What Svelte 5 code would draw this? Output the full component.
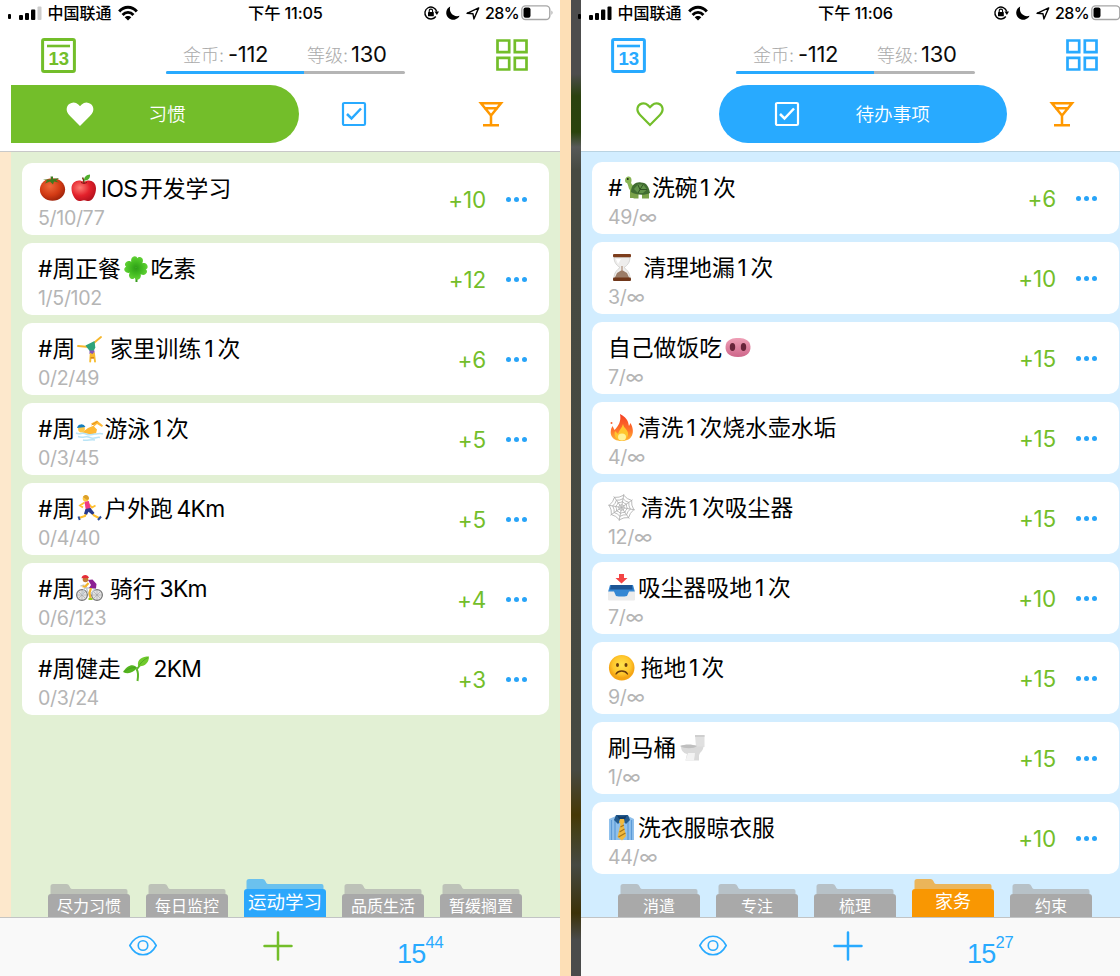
<script>
  // Title parts: [start, content]; a leading colon marks a drawn pictogram.
  const habits = [
    { parts: [[38, ':tomato'], [69.5, ':apple'], [101, 'IOS'], [140, '开发学习']], count: '5/10/77', score: '+10' },
    { parts: [[38, '#周正餐'], [122, ':clover'], [150.5, '吃素']], count: '1/5/102', score: '+12' },
    { parts: [[38, '#周'], [76, ':cartwheel'], [110, '家里训练'], [204.5, '1'], [217.5, '次']], count: '0/2/49', score: '+6' },
    { parts: [[38, '#周'], [76, ':swim'], [104.5, '游泳'], [153, '1'], [166, '次']], count: '0/3/45', score: '+5' },
    { parts: [[38, '#周'], [76, ':run'], [104.5, '户外跑'], [176.5, '4Km']], count: '0/4/40', score: '+5' },
    { parts: [[38, '#周'], [76, ':bike'], [110, '骑行'], [159.5, '3Km']], count: '0/6/123', score: '+4' },
    { parts: [[38, '#周健走'], [121.5, ':seedling'], [153.5, '2KM']], count: '0/3/24', score: '+3' }
  ];
  const todos = [
    { parts: [[38, '#'], [53.5, ':turtle'], [82, '洗碗'], [130, '1'], [143, '次']], count: '49/∞', score: '+6' },
    { parts: [[39, ':hourglass'], [74.5, '清理地漏'], [168.5, '1'], [181.5, '次']], count: '3/∞', score: '+10' },
    { parts: [[38, '自己做饭吃'], [154, ':pig']], count: '7/∞', score: '+15' },
    { parts: [[39, ':fire'], [69, '清洗'], [117.5, '1'], [130.5, '次烧水壶水垢']], count: '4/∞', score: '+15' },
    { parts: [[39, ':web'], [71.7, '清洗'], [120, '1'], [133, '次吸尘器']], count: '12/∞', score: '+15' },
    { parts: [[39, ':inbox'], [69, '吸尘器吸地'], [186, '1'], [199, '次']], count: '7/∞', score: '+10' },
    { parts: [[39, ':sad'], [71.7, '拖地'], [120, '1'], [132.5, '次']], count: '9/∞', score: '+15' },
    { parts: [[38, '刷马桶'], [108.5, ':toilet']], count: '1/∞', score: '+15' },
    { parts: [[39, ':shirt'], [69, '洗衣服晾衣服']], count: '44/∞', score: '+10' }
  ];
  const screens = [
    { kind: 'habit', time: '下午 11:05', rows: habits, sup: '44', active: 2,
      folders: ['尽力习惯', '每日监控', '运动学习', '品质生活', '暂缓搁置'] },
    { kind: 'todo', time: '下午 11:06', rows: todos, sup: '27', active: 3,
      folders: ['消遣', '专注', '梳理', '家务', '约束'] }
  ];
  const width = (parts, i) => (i + 1 < parts.length ? parts[i + 1][0] - parts[i][0] + 'px' : 'auto');
  const spokes = [0, 45, 90, 135];
</script>

{#snippet pictogram(name)}
  <svg class="emoji" viewBox="0 0 27 27">
    {#if name === ':tomato'}
      <defs><radialGradient id="g-tomato" cx=".4" cy=".35" r=".75"><stop offset="0" stop-color="#ef6a3c" /><stop offset=".55" stop-color="#d23a14" /><stop offset="1" stop-color="#8f1d08" /></radialGradient></defs>
      <ellipse cx="14.500" cy="14.500" rx="12.600" ry="11.300" fill="url(#g-tomato)" />
      <path d="M13 4.500l-.5-3 2.500 0 0 2.500 6-1-3 2.500 3 2-5-1-1 3-3-3-5 2 2-3-4-1z" fill="#3e7a1f" />
    {:else if name === ':apple'}
      <defs><radialGradient id="g-apple" cx=".35" cy=".35" r=".8"><stop offset="0" stop-color="#ff7d74" /><stop offset=".5" stop-color="#e3212b" /><stop offset="1" stop-color="#a80d1a" /></radialGradient></defs>
      <path d="M14 7C9 3.500 1.500 6 1.500 13.500c0 6 4 12.500 8 12.500 2 0 2.500-.8 4.500-.8s2.500.8 4.500.8c4 0 7.500-6.500 7.500-12.500C26 6 19 3.500 14 7z" fill="url(#g-apple)" />
      <path d="M11 7.500q3 2 6 0" stroke="#8e0d14" stroke-width="1" fill="none" />
      <path d="M14 8c0-3-.5-4-1.500-5.500" stroke="#6b3b16" stroke-width="1.400" fill="none" />
      <path d="M14 5.500c0-4 2.500-5.500 6-6 .3 4-2 6-6 6z" fill="#4fae2c" />
    {:else if name === ':clover'}
      <defs><radialGradient id="g-clover" gradientUnits="userSpaceOnUse" cx="14" cy="13" r="13"><stop offset="0" stop-color="#2c9d16" /><stop offset=".5" stop-color="#45bd22" /><stop offset="1" stop-color="#69d63b" /></radialGradient></defs>
      <path d="M14 13c1.500 5 .3 9 .5 14" stroke="#3a9d20" stroke-width="2" fill="none" />
      {#each [8, 98, 188, 278] as a}
        <path d="M14 13C8 10.500 7 5 9 2.800 11 .8 13.300 1.500 14 3.200c.7-1.700 3-2.400 5-.4 2 2.200 1 7.700-5 10.200z" fill="url(#g-clover)" transform="rotate({a} 14 13)" />
      {/each}
    {:else if name === ':cartwheel'}
      <path d="M2 11l11 1L25 2" stroke="#f6b72c" stroke-width="1.900" fill="none" stroke-linecap="round" />
      <path d="M9.500 10.500L18.500 6l.8 6.500-1.600 3.500h-4z" fill="#2ea37b" />
      <path d="M13.500 15.500h5v3.500h-5z" fill="#8655b5" />
      <path d="M14.700 19l-.5 7.500M18 18.500l1 8" stroke="#f7bd31" stroke-width="1.900" stroke-linecap="round" />
      <circle cx="16.300" cy="21" r="2.300" fill="#f8b930" /><path d="M14.500 22h3.600v1.700h-3.600z" fill="#d98a17" />
    {:else if name === ':swim'}
      <path d="M6 17.500l6-4.500 6-2.500-3-2 6-3 6 5-1 1.500-5-3-3 2.500 3 3-1 4-6 1z" fill="#ffb934" />
      <path d="M15.500 10l6-3.500" stroke="#e18f1c" stroke-width="1" fill="none" />
      <circle cx="5.500" cy="14" r="3.400" fill="#ffc94a" /><path d="M1 13a4.500 4.500 0 0 1 8.500-1z" fill="#157ec0" />
      <path d="M0 18c4 2 6-1 10 1s6 0 9 0 5-1 8 0M2 21.500c5 2 8-1 12 1s7-1 10 0M7 25c4 1 8-1 12 0" stroke="#b9e4f6" stroke-width="1.500" fill="none" />
    {:else if name === ':run'}
      <path d="M11 15l-2 6-6 2M14 15l4 5.500 6 3" stroke="#ffc02e" stroke-width="2.100" fill="none" />
      <path d="M8.500 7.500L4 10.500l3 2M13 9l3 3.500 3.500-2" stroke="#ffc02e" stroke-width="1.800" fill="none" />
      <path d="M8.500 6.500l4.300-.5 2 8-5 1z" fill="#ef3984" />
      <path d="M9.500 14l5-1 4 5-2.300 1.800-3.700-3-1.500 3-3-1z" fill="#273a8d" />
      <circle cx="9.700" cy="3.500" r="3" fill="#ffc841" /><path d="M7 2c2-3.500 6-2 6 2l-2 1z" fill="#dca02a" />
      <path d="M2.500 21.500l1.200 3.500M22 25l3-3.500" stroke="#2e4e9b" stroke-width="2" />
    {:else if name === ':bike'}
      <circle cx="6" cy="20" r="5.400" fill="#e2e2e2" stroke="#777" stroke-width="1.200" />
      <circle cx="21" cy="20" r="5.400" fill="#e2e2e2" stroke="#777" stroke-width="1.200" />
      {#each [6, 21] as x}
        {#each spokes as a}<path d="M{x - 5} 20h10" stroke="#999" stroke-width=".5" transform="rotate({a} {x} 20)" />{/each}
      {/each}
      <path d="M6 20l3.500-9 4 10 6-8M9 13h9M4.500 11l4-1" stroke="#c2cad0" stroke-width="1.400" fill="none" />
      <path d="M12 5l4.500-.5 4 4.500-.5 4.500-7-.5 2-3z" fill="#8c2193" />
      <path d="M12.500 8l-3 3.500-3 0M15 13l-1.500 5 1 5" stroke="#f6b629" stroke-width="2.200" fill="none" />
      <circle cx="9.500" cy="4.500" r="2.800" fill="#c27a35" /><path d="M5.500 3.200c.5-4 6.500-4.500 7.500-.2z" fill="#e52c38" />
      <path d="M12.500 24h4" stroke="#9acc22" stroke-width="2" />
    {:else if name === ':seedling'}
      <path d="M15.500 26c1-6 1-9-1-12M15 14l4-5" stroke="#5cb628" stroke-width="2" fill="none" />
      <path d="M15 13C12 8 5 10 1 17c5 2.500 10 1 14-4z" fill="#55b51f" />
      <path d="M16 11C15 4 20 1.500 27 1.500c0 6-4 10.500-11 9.500z" fill="#70ca2c" />
      <path d="M15 13C11 12 7 13 2 17M17 10.500c3-4 5-6 9-8" stroke="#3d951b" stroke-width=".6" fill="none" />
    {:else if name === ':turtle'}
      <path d="M6 16h4.500v8H6zM21 16h4v8.500h-4zM10.500 18h4v6.500h-5zM18 18h4v6.500h-4z" fill="#7ba34a" />
      <path d="M9 17C4 17 5 12 3 9 0 9 .5 3 4 2.500 8 2 8 7 7 9l3 4z" fill="#88b554" />
      <path d="M7 18c0-8 6-10.500 10-9.500 6 0 8 5 9 10.500-6 3-14 2-19-1z" fill="#416d31" />
      <path d="M10 15l4-4.500 5 0 4 5-4 3.500h-5z" fill="#62934a" /><path d="M14 11l2 4.500 3-5M16 15.500l-2 3.500M16 15.500l7 0" stroke="#2f5322" fill="none" />
      <circle cx="3.800" cy="5" r=".9" fill="#15240d" />
    {:else if name === ':hourglass'}
      <path d="M6 3h16c0 6-3 8.500-6 10.500 3 2.500 6 5 6 11H6c0-6 3-8.500 6-11C9 11.500 6 9 6 3z" fill="#eeedec" stroke="#c8c8c6" stroke-width=".7" />
      <path d="M14 16l5 3 2.300 5H6.700L9 19z" fill="#9b7c67" /><path d="M8 5h5l-3 5z" fill="#fff" />
      <path d="M13.300 12h1.400v5h-1.400z" fill="#b89b88" />
      <rect x="5" y="0" width="18" height="3.200" rx="1" fill="#7d3d1c" /><rect x="5" y="23.500" width="18" height="3.500" rx="1" fill="#70371a" />
    {:else if name === ':pig'}
      <defs><linearGradient id="g-pig" x1="0" y1="0" x2="0" y2="1"><stop offset="0" stop-color="#ef9fb6" /><stop offset="1" stop-color="#ce668a" /></linearGradient></defs>
      <path d="M2 10c2-5 7-6 12-6s10 1 12 6c2 7-2 13-12 13S0 17 2 10z" fill="url(#g-pig)" />
      <ellipse cx="8.500" cy="13" rx="2.700" ry="4" fill="#68243a" /><ellipse cx="19.500" cy="13" rx="2.700" ry="4" fill="#68243a" />
    {:else if name === ':fire'}
      <defs><linearGradient id="g-fire" x1="0" y1="0" x2="0" y2="1"><stop offset="0" stop-color="#f43e23" /><stop offset=".6" stop-color="#ff732b" /><stop offset="1" stop-color="#ffb934" /></linearGradient></defs>
      <path d="M12 0c9 5 8 9 9 12l1.500-3c5 9 2 18-8.500 18C2 27 1 18 4.500 12l2 4c4-4 7-9 5.500-16z" fill="url(#g-fire)" />
      <path d="M15 10c1 5 6 6 5 11-1 4-4 5.500-7 5.500S5 23 7 17l3 3c1-4 4-6 5-10z" fill="#ffc62e" />
      <ellipse cx="14" cy="23" rx="4" ry="3.500" fill="#fff39a" /><circle cx="3.500" cy="9" r="1" fill="#f66331" />
    {:else if name === ':web'}
      <g fill="none" stroke="#b0b0b0" stroke-width=".8">
        {#each spokes as a}<path d="M0 13.500h27" transform="rotate({a + 10} 13.500 13.500)" />{/each}
        {#each [3, 6, 9, 12.5] as r}<path d="M0 {-r}Q{r * 0.32} {-r * 0.72} {r * 0.7} {-r * 0.7} {r * 0.72} {-r * 0.32} {r} 0 {r * 0.72} {r * 0.32} {r * 0.7} {r * 0.7} {r * 0.32} {r * 0.72} 0 {r} {-r * 0.32} {r * 0.72} {-r * 0.7} {r * 0.7} {-r * 0.72} {r * 0.32} {-r} 0 {-r * 0.72} {-r * 0.32} {-r * 0.7} {-r * 0.7} {-r * 0.32} {-r * 0.72} 0 {-r}z" transform="translate(13.500 13.500) rotate(10)" />{/each}
      </g>
    {:else if name === ':inbox'}
      <path d="M2 12h23l2 6v7.500q0 1-1 1H1q-1 0-1-1V18z" fill="#ececec" />
      <path d="M2 11h23l1.800 6.500H21l-2 4.500q-5.500 1-11 0L6 17.500H.2z" fill="#3487d3" />
      <path d="M3 11h21l.6 4.500H2z" fill="#1d5595" />
      <path d="M11 0h5v4h3.500L13.500 9.500 7.500 4H11z" fill="#f34545" />
    {:else if name === ':sad'}
      <defs><radialGradient id="g-sad" cx=".5" cy=".4"><stop offset="0" stop-color="#ffe34d" /><stop offset=".7" stop-color="#ffc62c" /><stop offset="1" stop-color="#f5a514" /></radialGradient></defs>
      <circle cx="13.700" cy="13.700" r="12.800" fill="url(#g-sad)" />
      <ellipse cx="9.500" cy="11" rx="1.500" ry="1.900" fill="#6a3c0c" /><ellipse cx="18" cy="11" rx="1.500" ry="1.900" fill="#6a3c0c" />
      <path d="M8 20c2.500-4 9-4 11.500 0" stroke="#6a3c0c" stroke-width="1.400" fill="none" stroke-linecap="round" />
    {:else if name === ':toilet'}
      <path d="M16 1h9.500v12H17z" fill="#e0e0e0" /><path d="M16 1h9.500v2H16z" fill="#cfcfcf" />
      <path d="M18 12.500h6.500c-.5 5-3.500 5-4.500 9v5H6.500L8 20c-4-1-6-4-6-7.500z" fill="#dadada" />
      <path d="M1 12c5-2 12-2 17 0-3 3-13 3-17 0z" fill="#bfbfbf" /><path d="M9 19l7 0-1 7.500H6.500z" fill="#f3f3f3" />
    {:else if name === ':shirt'}
      <path d="M1 5l7-3h12l6 3v21H1z" fill="#8fc0ec" />
      <path d="M3.500 6v20M7 5v21M20 5v21M23.500 6v20" stroke="#5d9ad6" stroke-width="1.200" />
      <path d="M8 1h12l2 5-4 4-4-4-4 4-4-4z" fill="#235a8d" /><path d="M9 1c2 2 8 2 10 0l-2 4h-6z" fill="#123d69" />
      <path d="M12 5h4l.6 3-1.300 2L18 22l-4 4.500-4.500-3.500 3-13L11 8z" fill="#f0b93d" /><path d="M12.500 13l3.500-2M11.500 18l5-3M10.500 23l7-4" stroke="#a67519" stroke-width="1.200" />
    {/if}
  </svg>
{/snippet}

{#snippet checkbox()}
  <svg class="check" viewBox="0 0 26 26"><rect x="2" y="2" width="22" height="22" rx="1.300" fill="none" stroke="currentColor" stroke-width="2.200" /><path d="M6 13l4.500 4.500L20 7.500" fill="none" stroke="currentColor" stroke-width="2.500" /></svg>
{/snippet}

<main>
  {#each screens as s}
    <section class="screen {s.kind}">
      <div class="edge"></div>
      <header>
        <div class="status">
          <svg class="signal" width="36" height="16" viewBox="0 0 36 16">
            <rect x="0" y="9" width="3" height="5" rx="1" /><rect x="11" y="10" width="4" height="5" rx="1" /><rect x="17" y="8" width="4" height="7" rx="1" /><rect x="23" y="4.500" width="4.300" height="10.500" rx="1" /><rect class="last" x="29.500" y="1.500" width="4" height="13.500" rx="1" />
          </svg>
          <b class="carrier">中国联通</b>
          <svg class="wifi" width="20" height="15" viewBox="0 0 20 15"><g fill="none" stroke="#000" stroke-width="2.900"><path d="M1.200 5.500C6-.1 14-.1 18.800 5.500" /><path d="M4.600 8.900c3-3.300 7.800-3.300 10.800 0" /></g><path d="M10 14.500L6.700 11.200c1.700-1.700 4.900-1.700 6.600 0z" /></svg>
          <b class="time">{s.time}</b>
          <svg class="lock" width="15" height="14" viewBox="0 0 15 14"><path d="M11.800 10.500A6 6 0 1 1 12.700 5.500" fill="none" stroke="#000" stroke-width="1.400" /><path d="M10.500 5.500h4.500L12.900 9z" /><rect x="4" y="6" width="5.800" height="4.300" rx=".6" /><path d="M5.200 6V4.800a1.700 1.700 0 0 1 3.400 0V6" fill="none" stroke="#000" stroke-width="1.100" /></svg>
          <svg class="moon" width="14" height="14" viewBox="0 0 14 14"><path d="M4.200.5A7 7 0 1 0 13.600 9.700C7.800 11.700 2.500 6.500 4.200.5z" /></svg>
          <svg class="arrow" width="14" height="13" viewBox="0 0 14 13"><path d="M1 6.300L12.700.9 7.900 12 7 6.800z" fill="none" stroke="#000" stroke-width="1.400" stroke-linejoin="round" /></svg>
          <b class="percent">28%</b>
          <svg class="battery" width="33" height="16" viewBox="0 0 33 16"><rect x=".8" y=".9" width="28" height="13.600" rx="3.800" fill="#fff" stroke="#a6a6a6" stroke-width="1.400" /><rect x="2.500" y="2.500" width="7" height="10.300" rx="2" /><path d="M30.500 5.500q2 2.200 0 4.500z" fill="#999" /></svg>
        </div>
        <div class="tools">
          <svg class="calendar" viewBox="0 0 35 35"><rect x="1.600" y="1.600" width="31.800" height="31.800" rx="1.500" fill="none" stroke="currentColor" stroke-width="3" /><path d="M6 8h23" stroke="currentColor" stroke-width="2.600" /><text x="17.800" y="26.800" text-anchor="middle">13</text></svg>
          <div class="stats">
            <div class="numbers"><span class="coin">金币:</span><span class="value coins">-112</span><span class="level">等级:</span><span class="value">130</span></div>
            <div class="progress"><i></i></div>
          </div>
          <svg class="grid" viewBox="0 0 32 32" fill="none" stroke="currentColor" stroke-width="2.700"><path d="M1.500 1.500h11.700v11.700H1.500zM18.800 1.500h11.700v11.700H18.800zM1.500 18.800h11.700v11.700H1.500zM18.800 18.800h11.700v11.700H18.800z" /></svg>
        </div>
        <nav>
          <div class="tab heart" class:on={s.kind === 'habit'}>
            <svg viewBox="0 0 28 26"><path d="M14 24L4.600 14.500C1.800 11.700 1 9.500 1.500 7.100 2.400 2.300 8.300.9 11.800 4.100L14 6.300l2.200-2.200c3.500-3.200 9.400-1.800 10.300 3 .5 2.400-.3 4.600-3.100 7.400z" /></svg>
            {#if s.kind === 'habit'}<span>习惯</span>{/if}
          </div>
          <div class="tab todo-tab" class:on={s.kind === 'todo'}>
            {@render checkbox()}
            {#if s.kind === 'todo'}<span>待办事项</span>{/if}
          </div>
          <div class="tab cocktail">
            <svg viewBox="0 0 26 26" fill="none" stroke="currentColor" stroke-width="2.500"><path d="M3 2.300h20L13 14.500zM6 7.300h14M13 14v10M5 24.200h16" /></svg>
          </div>
        </nav>
      </header>
      <div class="body">
        {#each s.rows as row}
          <article>
            <div class="text">
              <div class="title">
                {#each row.parts as [x, part], i}
                  <span class:latin={/^[A-Z0-9]/.test(part)} style:width={width(row.parts, i)}>{#if part[0] === ':'}{@render pictogram(part)}{:else}{part}{/if}</span>
                {/each}
              </div>
              <div class="count">{row.count}</div>
            </div>
            <div class="score">{row.score}</div>
            <div class="dots"><i></i><i></i><i></i></div>
          </article>
        {/each}
        <div class="folders">
          {#each s.folders as f, i}
            <div class="folder" class:active={i === s.active}>
              <svg viewBox="0 0 82 10"><path d="M2.500 10V2.500Q2.500 0 5 0H18.500Q20.500 0 21.200 1.800L22.500 4.300Q23 5 24 5H77.500Q79.500 5 79.500 7V10z" /></svg>
              <div>{f}</div>
            </div>
          {/each}
        </div>
      </div>
      <footer>
        <svg class="eye" viewBox="0 0 30 22" fill="none" stroke="currentColor" stroke-width="1.700"><path d="M1.200 11C8-2 22-2 28.800 11 22 24 8 24 1.200 11z" /><circle cx="15" cy="11" r="5" /></svg>
        <svg class="plus" viewBox="0 0 30 30" stroke="currentColor" stroke-width="2.500" stroke-linecap="round"><path d="M15 1.500v27M1.500 15h27" /></svg>
        <div class="day">15<sup>{s.sup}</sup></div>
      </footer>
    </section>
  {/each}
</main>

<style>
  :global(body) { margin: 0; background: #fddfb6; }
  main { width: 1120px; height: 976px; overflow: hidden; display: grid; grid-template-columns: 570px 570px; font-family: Inter, "Noto Sans CJK SC", sans-serif; }
  svg { display: block; overflow: visible; flex: none; }
  .screen { display: grid; grid-template-columns: 11px 549px; grid-template-rows: 151px 766px 59px; width: 560px; height: 976px; color: #000; }
  .habit { --accent: #73be2a; --ground: #e2f0d4; }
  .todo { --accent: #28aaff; --ground: #d2edff; }
  .edge { grid-row: 1 / 4; grid-column: 1; }
  .habit .edge { background: linear-gradient(#fff 0 151px, #c9c9c9 151px 152px, #fde8cc 152px 917px, #c5c5c3 917px 918px, #f9f9f9 918px); }
  .todo .edge { border-left: 1px solid #fddfb6; background: linear-gradient(#4d4d4d 0, #4d4d4d 74px, #2b420f 96px, #2b430d 132px, #575958 147px, #474a42 170px, #464942 770px, #463805 815px, #45401b 832px, #464942 865px, #3c3108 913px, #4a4b4b 940px, #4b4b4b); }
  header { grid-column: 1 / 3; grid-row: 1; height: 151px; z-index: 1; }
  .habit header { background: #fff; }
  .todo header { background: linear-gradient(to right, transparent 11px, #fff 11px); }
  .status { height: 26px; display: flex; align-items: center; padding-left: 8px; white-space: nowrap; font-size: 16px; }
  b { font-weight: 500; line-height: 20px; }
  .signal { margin: 0 3.500px 0 0; }
  .habit .last { fill: #ccc; }
  .carrier { width: 70px; padding-bottom: 1px; }
  .wifi { margin-right: 110.500px; }
  .time { width: 175.500px; font-size: 16.300px; letter-spacing: -.15px; padding-bottom: .5px; }
  .lock { margin-right: 7.500px; }
  .moon { margin-right: 6px; }
  .arrow { margin-right: 5px; }
  .percent { width: 36px; font-size: 16px; letter-spacing: -.6px; }
  .tools { height: 59px; display: flex; align-items: flex-start; padding-left: 41px; color: var(--accent); }
  .calendar { width: 35px; height: 35px; margin: 12px 90px 0 0; }
  .calendar text { font: bold 18.500px "Liberation Sans", sans-serif; fill: currentColor; }
  .stats { width: 239px; margin-right: 91px; }
  .numbers { height: 45px; display: flex; align-items: baseline; padding: 14px 0 0 17px; box-sizing: border-box; white-space: nowrap; color: #0b0b0b; line-height: 28px; }
  .coin, .level { color: #aaa; font-size: 18px; font-weight: 300; width: 45px; }
  .level { width: 44px; }
  .value { font-size: 22px; letter-spacing: -.3px; }
  .coins { width: 79px; }
  .progress { height: 3px; border-radius: 2px; background: #b5b5b5; overflow: hidden; }
  .progress i { display: block; width: 138px; height: 100%; background: #28aaff; }
  .grid { width: 32px; height: 32px; margin-top: 13px; }
  nav { height: 58px; display: grid; padding-left: 11px; color: #28aaff; }
  .habit nav { grid-template-columns: 288px 110px 140px; }
  .todo nav { grid-template-columns: 137.500px 288px 110px; }
  .tab { display: flex; align-items: center; justify-content: center; }
  .tab.on { justify-content: flex-start; color: #fff; background: var(--accent); font-size: 18.600px; font-weight: 350; }
  .habit .tab.on { border-radius: 0 29px 29px 0; padding-left: 54.500px; }
  .todo .tab.on { border-radius: 29px; padding-left: 55px; }
  .tab.on span { margin: 0 0 3px 56px; }
  .tab.heart.on span { margin-left: 55px; }
  .heart svg { width: 28px; height: 26px; fill: none; stroke: #73be2a; stroke-width: 2.200; }
  .heart.on svg { fill: #fff; stroke: #fff; stroke-width: 1.500; }
  .check, .cocktail svg { width: 26px; height: 26px; }
  .cocktail { color: #ff9800; }
  .habit .cocktail { padding-left: 24px; }
  .body { grid-column: 2; grid-row: 2; border-top: 1px solid #c8c8c8; background: var(--ground); padding: 11px 11px 0; box-sizing: border-box; display: flex; flex-direction: column; gap: 8px; }
  .todo .body { padding-top: 10px; border-color: #b9d3e2; }
  article { height: 72px; width: 527px; box-sizing: border-box; border-radius: 10px; background: #fff; display: flex; padding-left: 16px; flex: none; }
  .text { width: 350px; padding-top: 10px; }
  .title { display: flex; height: 31px; line-height: 31px; font-size: 22.800px; white-space: nowrap; }
  .title span { flex: none; }
  .title .latin { letter-spacing: -.7px; }
  .emoji { width: 27px; height: 27px; margin-top: 2px; }
  .count { color: #b5b5b5; font-size: 19.600px; line-height: 29px; letter-spacing: -.35px; }
  .score { width: 98px; text-align: right; color: #73be2a; font-size: 22.500px; line-height: 73px; letter-spacing: -.2px; }
  .dots { display: flex; align-items: center; gap: 2.700px; margin-left: 20px; padding-top: 1px; }
  .dots i { width: 5.300px; height: 5.300px; border-radius: 50%; background: #28a4f8; }
  .folders { height: 33px; margin: auto 0 0 26px; display: flex; align-items: flex-end; gap: 16px; color: #fff; }
  .folder { width: 82px; --c: #a9a9a9; flex: none; font-size: 16px; text-align: center; }
  .folder svg { width: 82px; height: 10px; fill: var(--c); opacity: .65; }
  .folder div { background: var(--c); height: 23px; line-height: 25px; border-radius: 3px 3px 0 0; white-space: nowrap; }
  .folder.active { font-size: 18.500px; }
  .folder.active div { height: 28.500px; line-height: 26px; }
  .habit .active { --c: #2ba7fc; }
  .todo .active { --c: #f99702; font-size: 18px; }
  footer { grid-column: 2; grid-row: 3; border-top: 1px solid #c2c4c5; background: #f9f9f9; display: flex; align-items: flex-start; color: #28aaff; }
  .eye { width: 30px; height: 21px; margin: 17px 105px 0 117px; }
  .plus { width: 30px; height: 30px; margin-top: 13px; color: var(--accent); }
  .day { font: 27px "Liberation Sans", sans-serif; line-height: 58px; margin: 7px 0 0 104px; letter-spacing: -.8px; }
  sup { font-size: 16.500px; line-height: 0; vertical-align: 15px; letter-spacing: -.2px; }
</style>
